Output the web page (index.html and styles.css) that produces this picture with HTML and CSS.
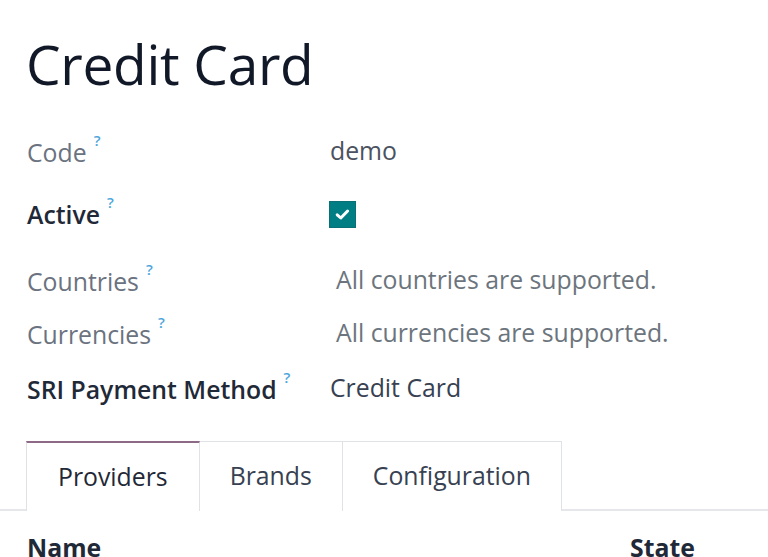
FILE: index.html
```html
<!DOCTYPE html>
<html>
<head>
<meta charset="utf-8">
<link rel="stylesheet" href="styles.css">
</head>
<body>
<div class="sheet">
  <h1 class="title">Credit Card</h1>
  <div class="fields">
    <div class="row r-code">
      <div class="label muted">Code<sup class="help">?</sup></div>
      <div class="value v-demo">demo</div>
    </div>
    <div class="row r-active">
      <div class="label strong">Active<sup class="help">?</sup></div>
      <div class="value">
        <span class="check">
          <svg width="15" height="13" viewBox="0 0 15 13"><path d="M2.2 6.8 L5.8 10 L12.6 3" fill="none" stroke="#fff" stroke-width="3" stroke-linecap="round" stroke-linejoin="round"/></svg>
        </span>
      </div>
    </div>
    <div class="row r-countries">
      <div class="label muted">Countries<sup class="help">?</sup></div>
      <div class="value v-muted">All countries are supported.</div>
    </div>
    <div class="row r-currencies">
      <div class="label muted">Currencies<sup class="help">?</sup></div>
      <div class="value v-muted">All currencies are supported.</div>
    </div>
    <div class="row r-sri">
      <div class="label strong">SRI Payment Method<sup class="help">?</sup></div>
      <div class="value v-dark">Credit Card</div>
    </div>
  </div>
  <div class="tabs">
    <div class="tab active">Providers</div>
    <div class="tab">Brands</div>
    <div class="tab">Configuration</div>
  </div>
  <div class="thead">
    <div class="th th-name">Name</div>
    <div class="th th-state">State</div>
  </div>
</div>
</body>
</html>
```
FILE: styles.css
```css
html, body {
  margin: 0;
  padding: 0;
  background: #fff;
  overflow: hidden;
}
body {
  font-family: "Open Sans", "Noto Sans", sans-serif;
  color: #374151;
}
.sheet {
  width: 768px;
  height: 557px;
  overflow: hidden;
}
.title {
  margin: 0;
  padding: 30px 0 0 26px;
  font-size: 55px;
  font-weight: 400;
  line-height: 68px;
  color: #111827;
  letter-spacing: -0.3px;
}
.fields {
  padding-left: 27px;
  margin-top: 31px;
}
.row {
  display: grid;
  grid-template-columns: 303px 1fr;
  align-items: center;
  height: 36px;
  font-size: 24.8px;
  line-height: 36px;
}
.r-active { margin-top: 26px; }
.r-countries { margin-top: 31px; }
.r-currencies { margin-top: 17px; }
.r-sri { margin-top: 19px; }
.label {
  white-space: nowrap;
}
.label.muted { color: #6b7280; }
.label.strong { color: #1f2937; font-weight: 600; }
.help {
  color: #4ea6dc;
  font-size: 15px;
  font-weight: 600;
  margin-left: 7px;
  position: relative;
  top: -7px;
}
.value { white-space: nowrap; }
.v-demo { color: #4b5260; }
.v-muted { color: #6c757d; padding-left: 6px; }
.v-dark { color: #374151; }
.check {
  display: flex;
  align-items: center;
  justify-content: center;
  width: 27px;
  height: 27px;
  margin-left: -1px;
  margin-top: 6px;
  background: #017e84;
  box-sizing: border-box;
  border: 1px solid #0b7076;
}
.tabs {
  display: flex;
  margin-top: 39px;
  padding-left: 26px;
  border-bottom: 2px solid #e5e7eb;
  height: 68px;
}
.tab {
  display: flex;
  align-items: center;
  padding: 0 30px 3px;
  font-size: 24.8px;
  color: #374151;
  border: 1px solid #e0e2e6;
  border-bottom: none;
  border-left: none;
  margin-bottom: -2px;
  height: 70px;
  box-sizing: border-box;
  background: #fff;
}
.tab.active {
  border-left: 1px solid #e0e2e6;
  border-top: 2px solid #8e6a86;
  color: #1f2937;
  padding: 0 31px 3px;
}
.thead {
  display: flex;
  padding-left: 27px;
  margin-top: 18px;
  font-size: 24.8px;
  font-weight: 700;
  color: #1f2937;
  line-height: 36px;
}
.th-name { width: 603px; }
```
